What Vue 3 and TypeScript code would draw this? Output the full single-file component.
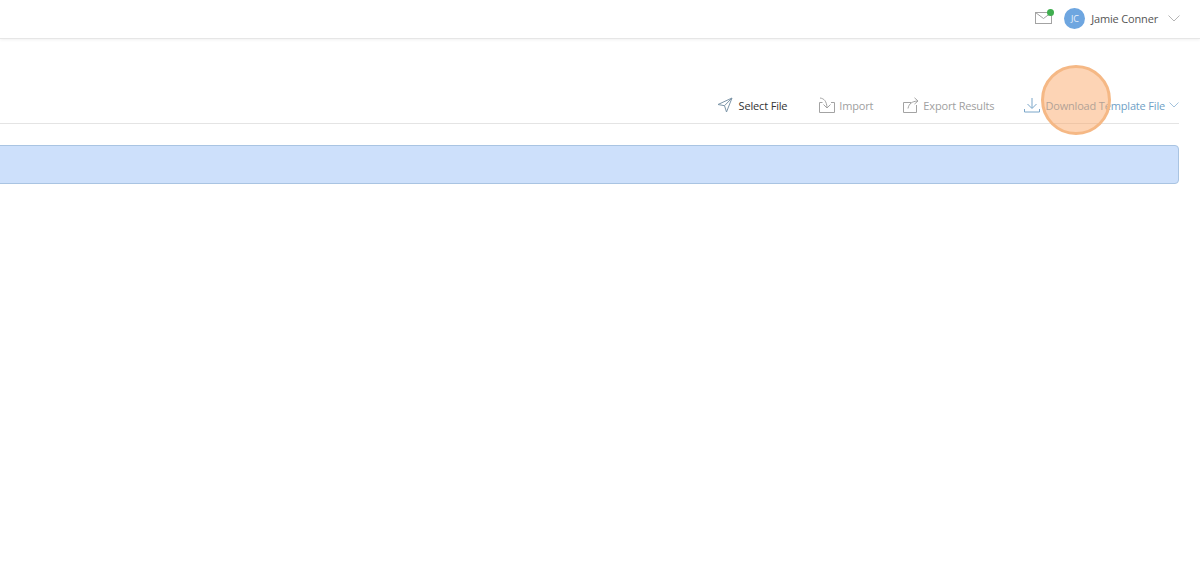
<script setup lang="ts">
</script>

<template>
  <div class="page">
    <header class="topbar">
      <div class="mail">
        <svg width="17" height="12" viewBox="0 0 17 12" fill="none" stroke="#a3a3a3" stroke-width="1">
          <rect x="0.5" y="0.5" width="16" height="11" />
          <path d="M0.5 0.5 L8.5 6.5 L16.5 0.5" />
        </svg>
        <span class="dot"></span>
      </div>
      <div class="avatar">JC</div>
      <span class="username">Jamie Conner</span>
      <svg class="user-caret" width="12" height="7" viewBox="0 0 12 7" fill="none" stroke="#b5b5b5">
        <path d="M0.5 0.5 L6 6 L11.5 0.5" />
      </svg>
    </header>

    <section class="toolbar">
      <div class="tool active">
        <svg width="16" height="16" viewBox="0 0 16 16" fill="none" stroke="#7c95a8">
          <path d="M15 1 L1 7.5 L7.5 8.7 L9.5 15 Z M15 1 L7.5 8.7" />
        </svg>
        <span>Select File</span>
      </div>
      <div class="tool muted import">
        <svg width="16" height="16" viewBox="0 0 16 16" fill="none" stroke="#a3a3a3">
          <path d="M3.5 5.5 H0.5 V15.5 H15.5 V5.5 H12" />
          <path d="M1 1 C5 1.5 7.5 4 8 10.5 M4.5 7.5 L8 11 L11.5 7.5" />
        </svg>
        <span>Import</span>
      </div>
      <div class="tool muted export">
        <svg width="16" height="16" viewBox="0 0 16 16" fill="none" stroke="#a3a3a3">
          <path d="M8 5.5 H0.5 V15.5 H13.5 V8" />
          <path d="M5 11.5 C6 6.5 9 4.5 14.5 4 M11.5 0.8 L15 4 L11.5 7" />
        </svg>
        <span>Export Results</span>
      </div>
      <div class="tool download">
        <svg width="16" height="16" viewBox="0 0 16 16" fill="none" stroke="#7ba6c9">
          <path d="M8 1 V11 M3.5 7 L8 11.5 L12.5 7" />
          <path d="M0.5 12 V15 H15.5 V12" />
        </svg>
        <span class="dl-label">Download Template File</span>
        <svg width="10" height="6" viewBox="0 0 10 6" fill="none" stroke="#a3c2dc">
          <path d="M0.5 0.5 L5 5 L9.5 0.5" />
        </svg>
      </div>
    </section>

    <div class="banner"></div>

    <div class="marker"></div>
  </div>
</template>

<style>
html, body {
  margin: 0;
  background: #fff;
}
</style>

<style scoped>
.page {
  position: relative;
  width: 1200px;
  height: 561px;
  overflow: hidden;
  background: #fff;
  font-family: "Open Sans", "Noto Sans", sans-serif;
  font-size: 11px;
  letter-spacing: -0.17px;
}
.topbar {
  box-sizing: border-box;
  height: 39px;
  padding: 0 20px 2px 0;
  display: flex;
  align-items: center;
  justify-content: flex-end;
  border-bottom: 1px solid #e6e6e6;
  box-shadow: 0 1px 3px rgba(0, 0, 0, 0.06);
}
.mail {
  position: relative;
  display: flex;
  margin-right: 12px;
}
.dot {
  position: absolute;
  top: -3px;
  right: -2px;
  width: 7px;
  height: 7px;
  border-radius: 50%;
  background: #3fae4f;
}
.avatar {
  width: 21px;
  height: 21px;
  border-radius: 50%;
  background: #6ea6e0;
  color: #e8f1fb;
  font-size: 9px;
  display: flex;
  align-items: center;
  justify-content: center;
  margin-right: 6px;
}
.username {
  color: #555;
  font-size: 11px;
  margin-right: 10px;
}
.toolbar {
  box-sizing: border-box;
  height: 85px;
  margin-right: 21px;
  display: flex;
  align-items: flex-end;
  justify-content: flex-end;
  padding-bottom: 10px;
  border-bottom: 1px solid #e4e4e4;
}
.tool {
  display: flex;
  align-items: center;
  gap: 4px;
  white-space: nowrap;
}
.tool.active {
  gap: 6px;
  color: #333;
}
.import {
  margin-left: 32px;
}
.export {
  margin-left: 30px;
}
.download {
  gap: 5px;
  margin-left: 30px;
  color: #6f9fc6;
}
.dl-label {
  margin-right: -1px;
}
.muted {
  color: #a0a0a0;
}
.banner {
  box-sizing: border-box;
  height: 39px;
  margin: 21px 21px 0 -6px;
  background: #cde0fb;
  border: 1px solid #a9c4e2;
  border-radius: 4px;
}
.marker {
  position: absolute;
  left: 1041px;
  top: 65px;
  width: 70px;
  height: 70px;
  box-sizing: border-box;
  border-radius: 50%;
  background: rgba(250, 165, 100, 0.48);
  border: 3px solid #f5b885;
}
</style>
